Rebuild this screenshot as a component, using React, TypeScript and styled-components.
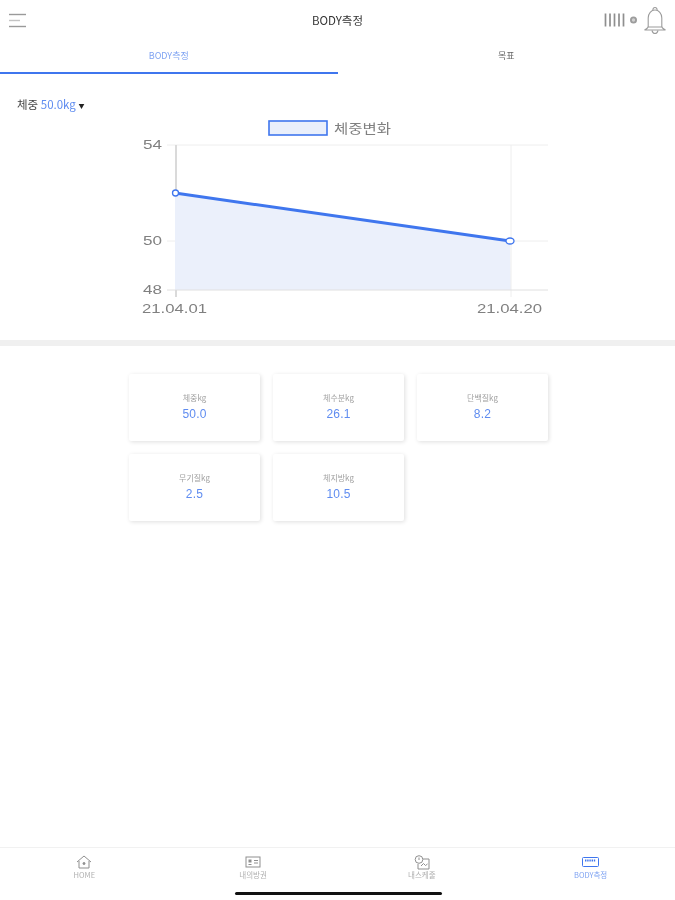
import styled, { createGlobalStyle } from 'styled-components';

const BLUE = '#3f76ee';
const FONT = '"Noto Sans CJK KR", "Noto Sans", "Liberation Sans", sans-serif';

const stats = [
    { name: '체중kg', value: '50.0' },
    { name: '체수분kg', value: '26.1' },
    { name: '단백질kg', value: '8.2' },
    { name: '무기질kg', value: '2.5' },
    { name: '체지방kg', value: '10.5' },
];

const GlobalStyle = createGlobalStyle`
    html, body {
        margin: 0;
        padding: 0;
        background: #fff;
    }
    body {
        font-family: ${FONT};
    }
`;

const MenuIcon = () => (
    <svg width="20" height="18" viewBox="0 0 20 18" fill="none">
        <path d="M1 3.5h17" stroke="#9a9a9a" strokeWidth="1.4" />
        <path d="M1 9.5h11" stroke="#c4c4c4" strokeWidth="1.4" />
        <path d="M1 15.5h17" stroke="#9a9a9a" strokeWidth="1.4" />
    </svg>
);

const BarcodeIcon = () => (
    <svg width="36" height="16" viewBox="0 0 36 16" fill="none">
        <path d="M1.5 1.5v13M6 1.5v13M10.5 1.5v13M15 1.5v13M19.5 1.5v13" stroke="#8f8f8f" strokeWidth="1.7" />
        <circle cx="29.5" cy="8" r="2.6" fill="#d0d0d0" stroke="#9c9c9c" strokeWidth="1.8" />
    </svg>
);

const BellIcon = () => (
    <svg width="24" height="29" viewBox="0 0 24 29" fill="none" stroke="#9c9c9c" strokeWidth="1.1">
        <path d="M10 4.2a2.1 2.1 0 1 1 4 0" />
        <path d="M5.2 21V12c0-4.6 3-8 6.8-8s6.8 3.4 6.8 8v9" />
        <path d="M1.5 24c1.6-.8 3-1.5 3.7-3h13.6c.7 1.5 2.1 2.2 3.7 3z" />
        <path d="M9 24.5c.5 2 1.6 3 3 3s2.5-1 3-3" />
    </svg>
);

const HomeIcon = () => (
    <svg width="16" height="14" viewBox="0 0 16 14" fill="none" stroke="#8f8f8f" strokeWidth="1">
        <path d="M1 7l7-6 7 6" />
        <path d="M3 6v7h10V6" />
        <circle cx="8" cy="8.5" r="1" fill="#8f8f8f" />
    </svg>
);

const TicketIcon = () => (
    <svg width="16" height="14" viewBox="0 0 16 14" fill="none" stroke="#8f8f8f" strokeWidth="1">
        <rect x="1" y="2" width="14" height="10" />
        <rect x="3.5" y="4.5" width="3" height="3" fill="#8f8f8f" stroke="none" />
        <path d="M9 5.5h4M9 8h4M3.5 9.5h3" />
    </svg>
);

const ScheduleIcon = () => (
    <svg width="16" height="15" viewBox="0 0 16 15" fill="none" stroke="#8f8f8f" strokeWidth="1">
        <path d="M9 4h6v10H4V9" />
        <circle cx="5" cy="4.5" r="3.8" />
        <path d="M5 2.5v2.5" />
        <path d="M7 11l2.5-2.5 2 2 2-1.5" />
    </svg>
);

const ScaleIcon = () => (
    <svg width="17" height="12" viewBox="0 0 17 12" fill="none" stroke={BLUE} strokeWidth="1">
        <rect x="0.5" y="1.5" width="16" height="9" rx="1" />
        <path d="M3 4.5h11" strokeWidth="2" strokeDasharray="1.4 .8" />
    </svg>
);

const navItems = [
    { label: 'HOME', icon: <HomeIcon /> },
    { label: '내의방권', icon: <TicketIcon /> },
    { label: '내스케줄', icon: <ScheduleIcon /> },
    { label: 'BODY측정', icon: <ScaleIcon />, active: true },
];

const WeightChart = () => (
    <ChartSvg width="675" height="202" viewBox="0 118 675 202">
        <rect x="269" y="121" width="58" height="14" fill="#e9effb" stroke={BLUE} strokeWidth="1.6" />
        <ChartText x="334" y="133" textLength="57" lengthAdjust="spacingAndGlyphs">체중변화</ChartText>

        <polygon points="175,193 510,241 511,290 175,290" fill="#ebf0fb" />
        <path d="M167 145H548M167 241H175M511 241H548" stroke="#eeeeee" />
        <path d="M511 145V297" stroke="#eeeeee" />
        <path d="M167 290H548" stroke="#e0e0e0" />
        <path d="M176 145V193M176 290V297" stroke="#dadada" strokeWidth="2" />

        <path d="M175 193L510 241" stroke={BLUE} strokeWidth="3" />
        <circle cx="175.5" cy="193" r="3" fill="#fff" stroke={BLUE} strokeWidth="1.3" />
        <ellipse cx="510" cy="241" rx="4" ry="3" fill="#fff" stroke={BLUE} strokeWidth="1.3" />

        <ChartText x="143" y="149" textLength="19" lengthAdjust="spacingAndGlyphs">54</ChartText>
        <ChartText x="143" y="245" textLength="19" lengthAdjust="spacingAndGlyphs">50</ChartText>
        <ChartText x="143" y="294" textLength="19" lengthAdjust="spacingAndGlyphs">48</ChartText>
        <ChartText x="142" y="313" textLength="65" lengthAdjust="spacingAndGlyphs">21.04.01</ChartText>
        <ChartText x="477" y="313" textLength="65" lengthAdjust="spacingAndGlyphs">21.04.20</ChartText>
    </ChartSvg>
);

const App = () => (
    <Page>
        <GlobalStyle />
        <Header>
            <MenuIcon />
            <Title>BODY측정</Title>
            <HeaderRight>
                <BarcodeIcon />
                <BellIcon />
            </HeaderRight>
        </Header>
        <Tabs>
            <Tab $active>BODY측정</Tab>
            <Tab>목표</Tab>
        </Tabs>
        <WeightSelect>
            체중 <WeightValue>50.0kg</WeightValue> <Caret>▼</Caret>
        </WeightSelect>
        <WeightChart />
        <Divider />
        <StatGrid>
            {stats.map((stat) => (
                <StatCard key={stat.name}>
                    <StatName>{stat.name}</StatName>
                    <StatValue>{stat.value}</StatValue>
                </StatCard>
            ))}
        </StatGrid>
        <BottomNav>
            {navItems.map((item) => (
                <NavItem key={item.label} $active={item.active}>
                    <NavIcon>{item.icon}</NavIcon>
                    {item.label}
                </NavItem>
            ))}
        </BottomNav>
        <HomeIndicator />
    </Page>
);

const Page = styled.div`
    position: relative;
    display: flex;
    flex-direction: column;
    height: 900px;
    overflow: hidden;
    background: #fff;
    filter: blur(0.45px);
`;

const Header = styled.header`
    display: flex;
    align-items: center;
    justify-content: space-between;
    height: 40px;
    padding: 0 8px 0 8px;
`;

const Title = styled.h1`
    position: absolute;
    left: 0;
    right: 0;
    top: 12px;
    margin: 0;
    font-size: 11.5px;
    line-height: 16px;
    font-weight: 400;
    text-align: center;
    color: #333;
`;

const HeaderRight = styled.div`
    display: flex;
    align-items: center;
    gap: 3px;
`;

const Tabs = styled.nav`
    display: flex;
    height: 34px;
`;

const Tab = styled.div<{ $active?: boolean }>`
    flex: 1;
    display: flex;
    align-items: center;
    justify-content: center;
    padding-bottom: 1px;
    font-size: 9px;
    color: ${(p) => (p.$active ? '#7fa3f2' : '#666')};
    border-bottom: 2px solid ${(p) => (p.$active ? BLUE : 'transparent')};
`;

const WeightSelect = styled.div`
    margin-top: 22px;
    padding-left: 17px;
    height: 16px;
    font-size: 11.5px;
    line-height: 16px;
    color: #444;
`;

const WeightValue = styled.span`
    color: #5f8cf0;
`;

const Caret = styled.span`
    font-size: 6px;
    color: #222;
    vertical-align: 1px;
`;

const ChartSvg = styled.svg`
    display: block;
    margin-top: 6px;
    flex: none;
`;

const ChartText = styled.text`
    font-family: "Liberation Sans", "Noto Sans CJK KR", sans-serif;
    font-size: 13px;
    fill: #808080;
`;

const Divider = styled.div`
    flex: none;
    height: 6px;
    margin-top: 20px;
    background: #f0f0f0;
`;

const StatGrid = styled.section`
    display: grid;
    grid-template-columns: repeat(3, 131px);
    grid-auto-rows: 67px;
    gap: 13px;
    margin-top: 28px;
    padding-left: 129px;
`;

const StatCard = styled.div`
    display: flex;
    flex-direction: column;
    align-items: center;
    justify-content: center;
    padding-bottom: 2px;
    border-radius: 2px;
    background: #fff;
    box-shadow: 1px 1px 4px rgba(0, 0, 0, 0.13);
`;

const StatName = styled.div`
    margin-bottom: 3px;
    font-size: 8px;
    line-height: 13px;
    color: #a0a0a0;
`;

const StatValue = styled.div`
    font-family: "Liberation Sans", sans-serif;
    font-size: 12px;
    line-height: 15px;
    letter-spacing: 0.2px;
    color: #5f8cf0;
`;

const BottomNav = styled.nav`
    display: grid;
    grid-template-columns: repeat(4, 1fr);
    margin-top: auto;
    height: 52px;
    border-top: 1px solid #f1f1f1;
`;

const NavItem = styled.div<{ $active?: boolean }>`
    display: flex;
    flex-direction: column;
    align-items: center;
    padding-top: 6px;
    font-size: 7.5px;
    line-height: 10px;
    color: ${(p) => (p.$active ? '#7fa3f2' : '#b0b0b0')};
`;

const NavIcon = styled.div`
    display: flex;
    align-items: center;
    justify-content: center;
    height: 16px;
`;

const HomeIndicator = styled.div`
    position: absolute;
    left: 235px;
    bottom: 5px;
    width: 207px;
    height: 3px;
    border-radius: 2px;
    background: #111;
`;

export default App;
